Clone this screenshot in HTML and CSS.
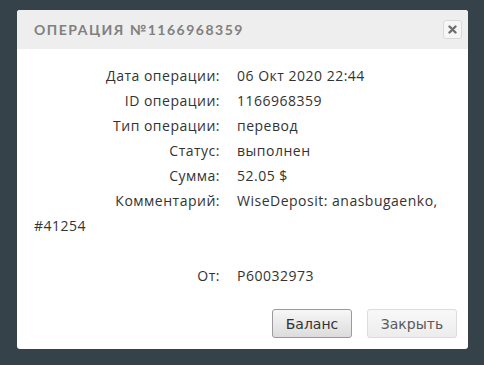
FILE: index.html
```html
<!DOCTYPE html>
<html lang="ru">
<head>
    <meta charset="UTF-8">
    <title>Операция</title>
    <link rel="stylesheet" href="styles.css">
</head>
<body>
    <div class="dialog">
        <div class="dialog-head">
            <span class="dialog-title">Операция №1166968359</span>
            <button class="close-btn" title="Закрыть">
                <svg width="9" height="9" viewBox="0 0 9 9"><path d="M1.5 1.5l6 6M7.5 1.5l-6 6" stroke="#6f6f6f" stroke-width="2.4" stroke-linecap="round"/></svg>
            </button>
        </div>
        <div class="dialog-body">
            <div class="row"><span class="label">Дата операции:</span><span class="value">06 Окт 2020 22:44</span></div>
            <div class="row"><span class="label">ID операции:</span><span class="value">1166968359</span></div>
            <div class="row"><span class="label">Тип операции:</span><span class="value">перевод</span></div>
            <div class="row"><span class="label">Статус:</span><span class="value">выполнен</span></div>
            <div class="row"><span class="label">Сумма:</span><span class="value">52.05 $</span></div>
            <div class="row"><span class="label">Комментарий:</span><span class="value">WiseDeposit: anasbugaenko,</span></div>
            <div class="row">#41254</div>
            <div class="row"></div>
            <div class="row"><span class="label">От:</span><span class="value">P60032973</span></div>
        </div>
        <div class="dialog-foot">
            <button class="btn btn-main">Баланс</button>
            <button class="btn btn-light">Закрыть</button>
        </div>
    </div>
</body>
</html>
```

FILE: styles.css
```css
body {
    margin: 0;
    padding: 10px 16px 0 17px;
    background: #36424a;
    font-family: 'Open Sans', sans-serif;
}

.dialog {
    width: 451px;
    height: 339px;
    background: #fff;
    border-radius: 3px;
    display: flex;
    flex-direction: column;
}

.dialog-head {
    height: 39px;
    background: #eeeeee;
    border-radius: 3px 3px 0 0;
    display: flex;
    align-items: center;
    justify-content: space-between;
    padding: 0 6px 0 17px;
}

.dialog-title {
    font-family: 'Lato', sans-serif;
    font-weight: bold;
    font-size: 14px;
    letter-spacing: 1.5px;
    text-transform: uppercase;
    color: #808080;
}

.close-btn {
    width: 19px;
    height: 19px;
    padding: 0;
    border: 1px solid #d9d9d9;
    border-radius: 3px;
    background: #f6f6f6;
    display: flex;
    align-items: center;
    justify-content: center;
}

.dialog-body {
    padding: 14px 17px 0 17px;
    font-size: 14px;
    line-height: 25px;
    letter-spacing: 0.5px;
    color: #333;
}

.row {
    min-height: 25px;
}

.label {
    display: inline-block;
    width: 186px;
    text-align: right;
    margin-right: 17px;
}

.dialog-foot {
    margin-top: auto;
    display: flex;
    justify-content: flex-end;
    gap: 15px;
    padding: 0 11px 11px 0;
}

.btn {
    height: 29px;
    font-family: 'DejaVu Sans', sans-serif;
    font-size: 14px;
    border-radius: 3px;
    padding: 0;
}

.btn-main {
    width: 80px;
    color: #333;
    border: 1px solid #9a9a9a;
    background: linear-gradient(#f7f7f7, #dcdcdc);
}

.btn-light {
    width: 90px;
    color: #5a5a5a;
    border: 1px solid #dcdcdc;
    background: linear-gradient(#f9f9f9, #ececec);
}
```
